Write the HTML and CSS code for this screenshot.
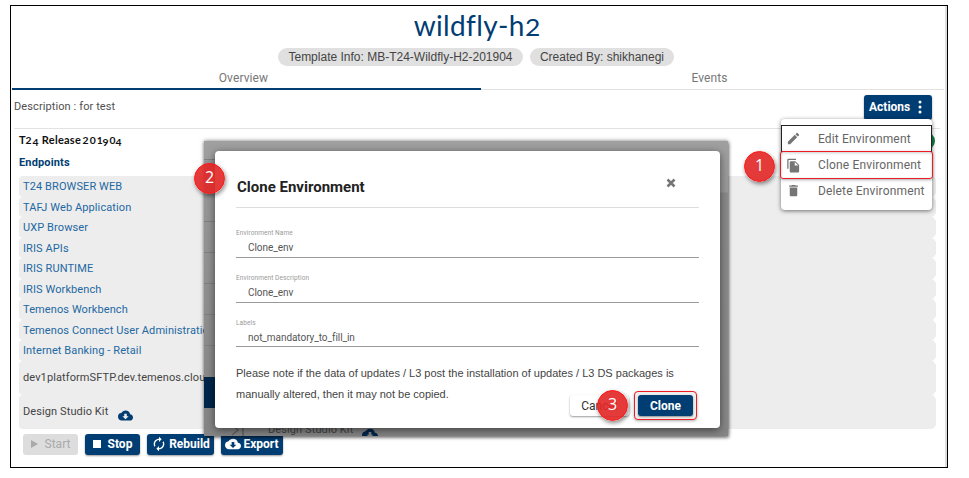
FILE: index.html
```html
<!DOCTYPE html>
<html lang="en">
<head>
<meta charset="utf-8">
<title>wildfly-h2</title>
<link rel="stylesheet" href="styles.css">
</head>
<body>
<svg class="defs" width="0" height="0">
  <symbol id="cloud" viewBox="0 0 24 24"><path d="M19.35 10.04A7.49 7.49 0 0 0 12 4C9.11 4 6.6 5.64 5.35 8.04A5.994 5.994 0 0 0 0 14c0 3.31 2.69 6 6 6h13c2.76 0 5-2.24 5-5 0-2.64-2.05-4.78-4.65-4.96zM17 13l-5 5-5-5h3V9h4v4h3z"/></symbol>
</svg>
<main class="frame">
  <h1 class="title">wildfly-h<span class="title-digit">2</span></h1>
  <div class="chips">
    <span class="chip chip-template"><span class="t">Template Info: MB-T24-Wildfly-H2-201904</span></span>
    <span class="chip chip-author"><span class="t">Created By: shikhanegi</span></span>
  </div>
  <nav class="tabs">
    <a class="tab active">Overview</a>
    <a class="tab">Events</a>
  </nav>
  <section class="toolbar">
    <span class="description">Description : for test</span>
    <button class="btn actions">Actions
      <svg width="4" height="14" viewBox="0 0 4 14"><circle cx="2" cy="2" r="1.5"/><circle cx="2" cy="7" r="1.5"/><circle cx="2" cy="12" r="1.5"/></svg>
    </button>
  </section>
  <section class="details">
    <h2 class="release">T<span class="old">2</span><span class="old low">4</span> Release <span class="old">201</span><span class="old low">9</span><span class="old">0</span><span class="old low">4</span></h2>
    <h3 class="endpoints">Endpoints</h3>
    <ul class="list">
      <li><a>T24 BROWSER WEB</a></li>
      <li><a>TAFJ Web Application</a></li>
      <li><a>UXP Browser</a></li>
      <li><a>IRIS APIs</a></li>
      <li><a>IRIS RUNTIME</a></li>
      <li><a>IRIS Workbench</a></li>
      <li><a>Temenos Workbench</a></li>
      <li><a>Temenos Connect User Administratio</a></li>
      <li><a>Internet Banking - Retail</a></li>
      <li class="plain sftp">dev1platformSFTP.dev.temenos.cloud</li>
      <li class="plain kit">Design Studio Kit <svg class="kit-cloud" width="15" height="15"><use href="#cloud"/></svg></li>
    </ul>
    <div class="buttons">
      <button class="btn start"><svg width="7" height="8" viewBox="0 0 7 8"><path d="M0 0l7 4-7 4z"/></svg>Start</button>
      <button class="btn stop"><svg width="8" height="8" viewBox="0 0 8 8"><path d="M0 0h8v8H0z"/></svg>Stop</button>
      <button class="btn rebuild"><svg width="16" height="16" viewBox="0 0 24 24"><path d="M12 6v3l4-4-4-4v3c-4.42 0-8 3.58-8 8 0 1.57.46 3.03 1.24 4.26L6.7 14.8A5.87 5.87 0 0 1 6 12c0-3.31 2.69-6 6-6zm6.76 1.74L17.3 9.2c.44.84.7 1.79.7 2.8 0 3.31-2.69 6-6 6v-3l-4 4 4 4v-3c4.42 0 8-3.58 8-8 0-1.57-.46-3.03-1.24-4.26z"/></svg>Rebuild</button>
      <button class="btn export"><svg width="16" height="16"><use href="#cloud"/></svg>Export</button>
    </div>
  </section>
</main>

<i class="status"></i>
<div class="menu">
  <div class="item focused"><svg width="15" height="15" viewBox="0 0 24 24"><path d="M3 17.25V21h3.75L17.81 9.94l-3.75-3.75L3 17.25zM20.71 7.04a.996.996 0 0 0 0-1.41l-2.34-2.34a.996.996 0 0 0-1.41 0l-1.83 1.83 3.75 3.75 1.83-1.83z"/></svg><span>Edit Environment</span></div>
  <div class="item chosen"><svg width="15" height="15" viewBox="0 0 24 24"><path d="M16 1H4a2 2 0 0 0-2 2v14h2V3h12V1zm-1 4 6 6v10c0 1.1-.9 2-2 2H7.99C6.89 23 6 22.100 6 21l.01-14c0-1.100.89-2 1.990-2h7zm-1 7h5.500L14 6.500V12z"/></svg><span>Clone Environment</span></div>
  <div class="item"><svg width="15" height="15" viewBox="0 0 24 24"><path d="M6 19c0 1.100.9 2 2 2h8c1.100 0 2-.9 2-2V7H6v12zM19 4h-3.500l-1-1h-5l-1 1H5v2h14V4z"/></svg><span>Delete Environment</span></div>
</div>

<div class="backdrop">
  <div class="side"><i></i><i></i><i></i><i></i><i></i><i></i><b></b></div>
  <div class="peek"><svg class="peek-arrow" width="14" height="14" viewBox="0 0 14 14"><path d="M1 2l6 5-6 5M12 0v14"/></svg><span>Design Studio Kit</span><svg class="peek-cloud" width="16" height="16"><use href="#cloud"/></svg></div>
  <div class="modal">
    <header class="modal-head"><h2>Clone Environment</h2><svg width="10" height="10" viewBox="0 0 10 10"><path d="M1.500 1.500l7 7M8.500 1.500l-7 7"/></svg></header>
    <div class="field"><label>Environment Name</label><span>Clone_env</span></div>
    <div class="field"><label>Environment Description</label><span>Clone_env</span></div>
    <div class="field"><label>Labels</label><span class="wide">not_mandatory_to_fill_in</span></div>
    <p class="note"><span class="n1">Please note if the data of updates / L3 post the installation of updates / L3 DS packages is</span><br><span class="n2">manually altered, then it may not be copied.</span></p>
    <div class="modal-actions">
      <button class="btn cancel">Cancel</button>
      <span class="ring"><button class="btn clone">Clone</button></span>
    </div>
  </div>
</div>
<span class="badge b1">1</span>
<span class="badge b2">2</span>
<span class="badge b3">3</span>
</body>
</html>
```

FILE: styles.css
```css
* { box-sizing: border-box; }
body { margin: 0; width: 969px; height: 478px; position: relative; overflow: hidden; background: #fff; font-family: Roboto, sans-serif; font-size: 12px; color: #505050; }
svg { display: block; fill: currentColor; flex: none; }
.defs { position: absolute; }
h1, h2, h3, p, ul { margin: 0; padding: 0; font-weight: 400; }
.frame { margin: 5px 0 0 10px; width: 938px; height: 463px; border: 1px solid #000; padding: 0 3px 0 1px; box-shadow: inset -2px 0 0 #ddd; }
.title { height: 42px; line-height: 38px; padding-right: 3px; text-align: center; font-family: Lato, sans-serif; font-size: 28px; color: #003d73; letter-spacing: 0.35px; }
.title-digit { display: inline-block; font-size: 23px; transform: scaleX(1.15); margin-left: 1px; }
.chips { display: flex; gap: 7px; height: 18px; padding-left: 266px; }
.chip { height: 18px; border-radius: 9px; background: #e0e0e0; line-height: 18px; text-align: center; font-family: "Liberation Sans", sans-serif; font-size: 12px; color: #444; white-space: nowrap; }
.chip-template { width: 245px; }
.chip-author { width: 144px; }
.tabs { display: flex; height: 24px; border-bottom: 1px solid #e2e2e2; }
.tab { flex: 1; height: 24px; padding-right: 6px; line-height: 25px; text-align: center; color: #777; letter-spacing: 0.1px; }
.tab.active { flex: 0 0 469px; border-bottom: 2px solid #003d73; }
.toolbar { display: flex; justify-content: space-between; align-items: center; height: 39px; margin-left: 2px; margin-right: 4px; padding: 0 8px 5px 0; border-bottom: 1px solid #e2e2e2; }
.btn { display: flex; align-items: center; border: 0; border-radius: 3px; padding: 0; background: #003d73; color: #fff; font: 700 12px Roboto, sans-serif; box-shadow: 0 1px 2px #0006; white-space: nowrap; }
.actions { width: 68px; height: 25px; padding: 0 10px 0 5px; justify-content: space-between; margin-top: 1px; }
.description { font-size: 11px; letter-spacing: .1px; }
.details { padding-left: 7px; }
.release { height: 22px; line-height: 21px; font: 700 11px/21px Lato, sans-serif; color: #111; letter-spacing: .25px; white-space: nowrap; }
.old { display: inline-block; font-size: 9px; line-height: 9px; transform: scaleX(1.15); letter-spacing: .9px; margin-left: .4px; }
.old.low { position: relative; top: 2px; }
.endpoints { height: 25px; line-height: 24px; font-size: 11px; font-weight: 700; color: #003d73; letter-spacing: .15px; }
.list { width: 916px; list-style: none; color: #2368a2; font-size: 11px; }
.list li { height: 20.55px; line-height: 21px; padding-left: 4px; background: #ededed; border-radius: 4px; letter-spacing: .1px; white-space: nowrap; box-shadow: 4px 0 0 -3px #ededed; }
.list .plain { color: #444; }
.list .sftp { height: 34px; line-height: 34px; }
.list .kit { display: flex; height: 34px; line-height: 34px; gap: 10px; }
.kit-cloud { color: #003d73; margin-top: 13px; }
.buttons { display: flex; gap: 7px; margin: 5px 0 0 4px; }
.buttons .btn { height: 21px; justify-content: center; gap: 7px; }
.buttons .start { width: 55px; background: #ddd; color: #aaa; font-weight: 400; box-shadow: none; }
.buttons .stop { width: 55px; }
.buttons .rebuild { width: 67px; gap: 2px; }
.buttons .export { width: 62px; gap: 2px; }
.status { position: absolute; left: 917px; top: 132px; width: 18px; height: 18px; border-radius: 50%; background: #128347; }
.menu { position: absolute; left: 781px; top: 119px; width: 151px; height: 91px; padding-top: 6px; background: #fff; border-radius: 4px; box-shadow: 0 1px 4px #0008; }
.item { display: flex; align-items: center; height: 25px; padding-left: 5px; gap: 17px; color: #666; font-size: 12px; letter-spacing: .15px; white-space: nowrap; }
.item svg { color: #757575; }
.focused { height: 27px; border: 2px solid #222; border-width: 1px; padding-left: 4px; margin: 0 0 -1px; }
.chosen { height: 28px; margin: 0 -1px -1px; border: 1.500px solid #ed1c24; border-radius: 3px; padding-left: 5px; box-shadow: 0 1px 3px #0005, inset 0 1px 3px #0003; }
.backdrop { position: absolute; left: 204px; top: 141px; width: 524px; height: 295px; padding: 10px 8px 8px 11px; background: linear-gradient(#a0a0a0, #999 51px, #8b8b8b 52px, #888); box-shadow: 0 0 4px #0008, 1px 2px 3px #0005; overflow: visible; }
.side { position: absolute; left: 0; top: 18px; width: 11px; height: 277px; background: linear-gradient(#999, #858585); display: grid; grid-template-rows: 62px 31px 31px 31px 31px 32px 31px; }
.side i { border-top: 1px solid #7f7f7f; }
.side b { background: #00264a; }
.peek { position: absolute; left: 0; right: 0; bottom: 0; height: 8px; overflow: hidden; display: flex; background: #858585; color: #444; font-size: 11px; letter-spacing: .1px; padding-left: 27px; }
.peek span { line-height: 13px; margin: -5px 9px 0 23px; }
.peek-arrow { margin-top: -5px; fill: none; stroke: #606060; stroke-width: 1.500; }
.peek-cloud { color: #00264a; margin-top: -2px; }
.modal { position: relative; height: 277px; padding: 0 21px; background: #fff; border-radius: 4px; box-shadow: 0 2px 8px #0008; }
.modal-head { display: flex; justify-content: space-between; align-items: center; height: 57px; padding: 15px 23px 0 1px; border-bottom: 1px solid #ddd; }
.modal-head h2 { font-size: 15px; font-weight: 700; color: #222; white-space: nowrap; }
.modal-head svg { stroke: #757575; stroke-width: 2.500; margin-top: -8px; }
.field { height: 44.600px; border-bottom: 1px solid #9a9a9a; display: flex; flex-direction: column; padding-top: 16px; white-space: nowrap; }
.modal-head + .field { height: 50px; padding-top: 21px; }
.field label { height: 9px; line-height: 9px; font-size: 6.500px; color: #999; letter-spacing: .1px; }
.field span { padding-left: 12px; line-height: 17px; font-size: 10px; color: #555; margin-top: 1px; letter-spacing: -.05px; }
.note { padding-top: 16px; line-height: 21px; font-family: "Liberation Sans", sans-serif; font-size: 11px; color: #444; white-space: nowrap; }
.modal-actions { position: absolute; right: 23px; top: 240px; display: flex; align-items: center; gap: 5px; }
.modal-actions .btn { height: 21px; justify-content: center; }
.cancel { width: 59px; background: #fff; color: #333; font-weight: 400; }
.clone { width: 55px; }
.ring { padding: 3px; border: 1.500px solid #ed1c24; border-radius: 4px; box-shadow: 0 1px 3px #0005; background: #eee; }
.badge { position: absolute; width: 31px; height: 31px; border-radius: 50%; border: 1.500px solid #ff1717; background: #e12626e8; color: #fff; font: 500 16px/27px "Open Sans", sans-serif; text-align: center; box-shadow: 1px 2px 4px #0007; }
.b1 { left: 744px; top: 151px; }
.b2 { left: 194px; top: 163px; }
.b3 { left: 597px; top: 390px; }
```
